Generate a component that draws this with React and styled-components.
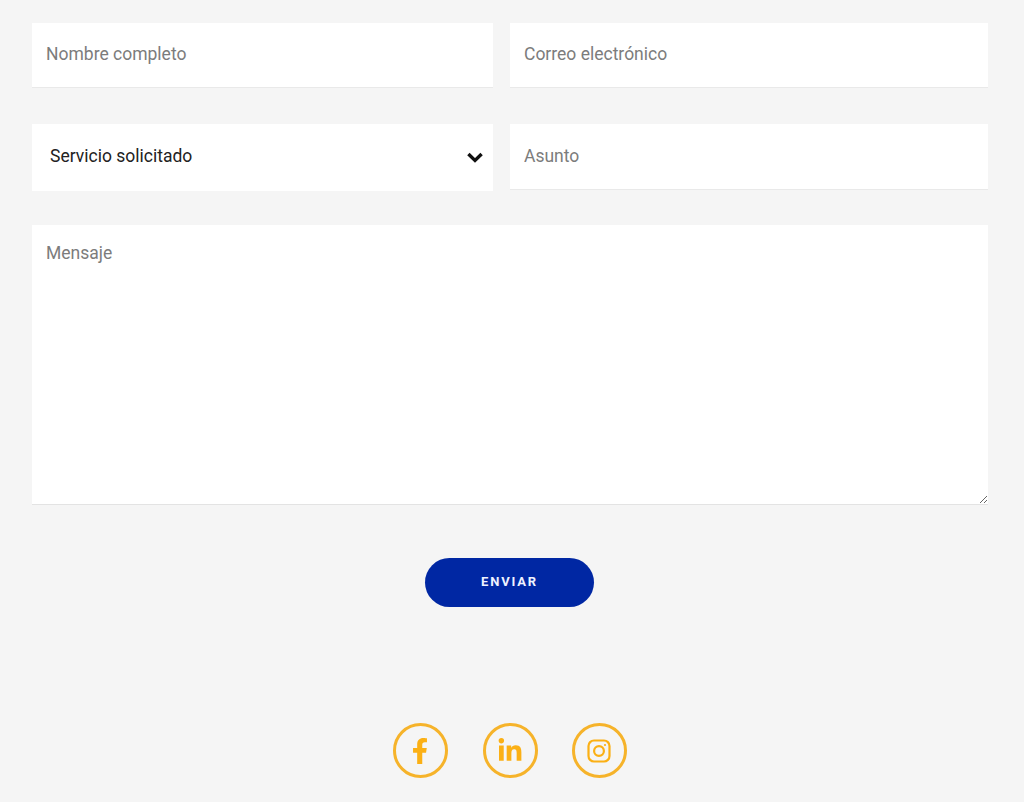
import styled, { createGlobalStyle } from 'styled-components';
import { FaFacebookF, FaLinkedinIn } from 'react-icons/fa';

const GlobalStyle = createGlobalStyle`
    html, body {
        margin: 0;
        background: #f5f5f5;
    }
    * {
        box-sizing: border-box;
    }
`;

function InstagramIcon() {
    return (
        <svg width="24" height="24" viewBox="0 0 24 24" fill="none" stroke="currentColor" strokeWidth="2.2">
            <rect x="1.5" y="1.5" width="21" height="21" rx="5.5" />
            <circle cx="12" cy="12" r="4.9" />
            <circle cx="18" cy="6" r="1.1" fill="currentColor" stroke="none" />
        </svg>
    );
}

function ChevronIcon() {
    return (
        <svg width="16" height="11" viewBox="0 0 16 11" fill="none" stroke="currentColor" strokeWidth="3.4">
            <polyline points="1.4,2 8,8.4 14.6,2" />
        </svg>
    );
}

export default function App() {
    return (
        <Page>
            <GlobalStyle />
            <Form onSubmit={(e) => e.preventDefault()}>
                <Field type="text" placeholder="Nombre completo" />
                <Field type="email" placeholder="Correo electrónico" />
                <SelectWrap>
                    <Select defaultValue="servicio">
                        <option value="servicio">Servicio solicitado</option>
                    </Select>
                    <Chevron><ChevronIcon /></Chevron>
                </SelectWrap>
                <Field type="text" placeholder="Asunto" $short />
                <Message placeholder="Mensaje" />
                <SubmitRow>
                    <SubmitButton type="submit">ENVIAR</SubmitButton>
                </SubmitRow>
            </Form>
            <Socials>
                <SocialLink href="#"><FaFacebookF /></SocialLink>
                <SocialLink href="#"><FaLinkedinIn /></SocialLink>
                <SocialLink href="#"><InstagramIcon /></SocialLink>
            </Socials>
        </Page>
    );
}

const Page = styled.div`
    width: 1024px;
    height: 802px;
    overflow: hidden;
    padding: 23px 36px 0 32px;
    font-family: Roboto, "Liberation Sans", sans-serif;
`;

const Form = styled.form`
    display: grid;
    grid-template-columns: 461px 478px;
    column-gap: 17px;
    row-gap: 36px;
    align-items: start;
`;

const Field = styled.input`
    display: block;
    width: 100%;
    height: ${(props) => (props.$short ? '66px' : '65px')};
    padding: 0 14px 2px;
    border: 0;
    border-bottom: 1px solid #e9e9e9;
    border-radius: 0;
    background: #fff;
    outline: none;
    font-family: inherit;
    font-size: 17.5px;
    color: #222;

    &::placeholder {
        color: #7c7c7c;
        opacity: 1;
    }
`;

const SelectWrap = styled.div`
    position: relative;
    height: 67px;
`;

const Select = styled.select`
    appearance: none;
    display: block;
    width: 100%;
    height: 100%;
    padding: 0 18px 3px;
    border: 0;
    border-radius: 0;
    background: #fff;
    outline: none;
    font-family: inherit;
    font-size: 17.5px;
    color: #222;
`;

const Chevron = styled.span`
    position: absolute;
    top: 28px;
    right: 10px;
    display: flex;
    color: #111;
    pointer-events: none;
`;

const Message = styled.textarea`
    grid-column: 1 / -1;
    display: block;
    width: 100%;
    height: 280px;
    margin-top: -2px;
    padding: 18px 14px;
    border: 0;
    border-bottom: 1px solid #e3e3e3;
    border-radius: 0;
    background: #fff;
    outline: none;
    font-family: inherit;
    font-size: 17.5px;
    line-height: 21px;
    color: #222;

    &::placeholder {
        color: #7c7c7c;
        opacity: 1;
    }
`;

const SubmitRow = styled.div`
    grid-column: 1 / -1;
    display: flex;
    justify-content: center;
    margin-top: 17px;
    padding-right: 1px;
`;

const SubmitButton = styled.button`
    width: 169px;
    height: 49px;
    padding: 0 0 2px;
    border: 0;
    border-radius: 25px;
    background: #0027a3;
    font-family: inherit;
    font-size: 13px;
    font-weight: 700;
    letter-spacing: 1.8px;
    color: #eef2ff;
    cursor: pointer;
`;

const Socials = styled.div`
    display: flex;
    justify-content: center;
    gap: 34.5px;
    margin-top: 116px;
`;

const SocialLink = styled.a`
    display: flex;
    align-items: center;
    justify-content: center;
    width: 55px;
    height: 55px;
    padding-right: 1px;
    border: 3px solid #f6b32a;
    border-radius: 50%;
    font-size: 26px;
    color: #fbb015;
    text-decoration: none;
`;
